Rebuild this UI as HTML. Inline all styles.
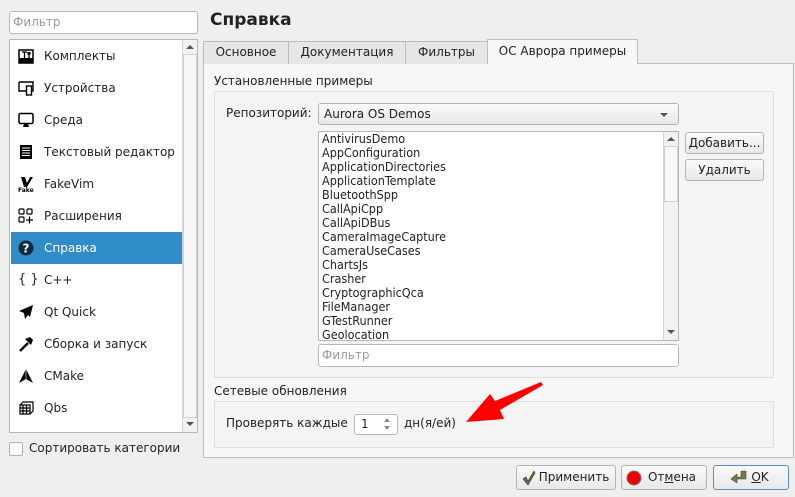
<!DOCTYPE html>
<html><head><meta charset="utf-8"><style>
*{box-sizing:border-box;margin:0;padding:0}
body{width:795px;height:497px;background:#efefef;font-family:"DejaVu Sans","Liberation Sans",sans-serif;font-size:12px;color:#222;position:relative;overflow:hidden}
.a{position:absolute}
.inp{background:#fff;border:1px solid #b8b8b8;border-radius:3px}
.ph{color:#999}
.btn{background:linear-gradient(#fafafa,#e8e8e8);border:1px solid #b4b4b4;border-radius:3px;text-align:center}
.item{position:absolute;left:1px;width:171px;height:32px;line-height:32px;padding-left:33px}
.ic{position:absolute;left:7px;top:8px;width:16px;height:16px}
.tab{position:absolute;top:41px;height:23px;border:1px solid #bdbdbd;border-bottom:none;background:#e6e6e6;line-height:21px;text-align:center;font-size:12px}
.li{font-size:12.5px;line-height:14px;font-family:"DejaVu Sans Condensed","DejaVu Sans",sans-serif}
</style></head><body>

<div class="a inp" style="left:9px;top:11px;width:189px;height:23px;line-height:21px;padding-left:3px"><span class="ph">Фильтр</span></div>

<div class="a" style="left:9px;top:39px;width:189px;height:394px;background:#fff;border:1px solid #b8b8b8">
  <div class="a" style="left:172px;top:0;width:15px;height:392px;background:#f2f2f2;border-left:1px solid #d6d6d6">
    <div class="a" style="left:3px;top:5px;border:4px solid transparent;border-bottom:4px solid #555;border-top:none"></div>
    <div class="a" style="left:0;top:14px;width:14px;height:364px;background:#f7f7f7;border:1px solid #d0d0d0"></div>
    <div class="a" style="left:3px;bottom:6px;border:4px solid transparent;border-top:4px solid #555;border-bottom:none"></div>
  </div>
  <div class="item" style="top:0">
    <svg class="ic" viewBox="0 0 16 16"><rect x="1" y="2" width="14" height="13" fill="none" stroke="#000" stroke-width="1.5"/><rect x="1" y="10" width="14" height="5" fill="#000"/><path d="M4 4h5M6.5 4v6M11 4v6M10 4v2h2V4" stroke="#000" stroke-width="1.3" fill="none"/></svg>Комплекты</div>
  <div class="item" style="top:32px">
    <svg class="ic" viewBox="0 0 16 16"><path d="M1 2h14v9h-4M8 11H1V2" fill="none" stroke="#000" stroke-width="1.4"/><rect x="8.5" y="6" width="5" height="9" fill="#fff" stroke="#000" stroke-width="1.4"/></svg>Устройства</div>
  <div class="item" style="top:64px">
    <svg class="ic" viewBox="0 0 16 16"><rect x="1" y="1.5" width="14" height="10" rx="1.5" fill="none" stroke="#000" stroke-width="1.5"/><path d="M5 15h6l-1-3H6z" fill="#000"/></svg>Среда</div>
  <div class="item" style="top:96px">
    <svg class="ic" viewBox="0 0 16 16"><rect x="2" y="1" width="12" height="14" fill="#000"/><path d="M4 4h8M4 6.5h8M4 9h8M4 11.5h8" stroke="#fff" stroke-width="1"/></svg>Текстовый редактор</div>
  <div class="item" style="top:128px">
    <svg class="ic" viewBox="0 0 16 16"><path d="M3 1h4l2 6 3-6h3L9 11H6z" fill="#000"/><text x="0" y="16" font-size="6" font-family="DejaVu Sans" font-weight="bold">Fake</text></svg>FakeVim</div>
  <div class="item" style="top:160px">
    <svg class="ic" viewBox="0 0 16 16"><rect x="1" y="1" width="5" height="5" rx="1" fill="none" stroke="#000" stroke-width="1.2"/><rect x="9" y="1" width="5" height="5" rx="1" fill="none" stroke="#000" stroke-width="1.2"/><rect x="1" y="9" width="5" height="5" rx="1" fill="none" stroke="#000" stroke-width="1.2"/><path d="M11.5 8.5v7M8 12h7" stroke="#000" stroke-width="1.3"/></svg>Расширения</div>
  <div class="item" style="top:192px;background:#308cc6;color:#fff">
    <svg class="ic" viewBox="0 0 16 16"><circle cx="8" cy="8" r="7.5" fill="#102a3d"/><text x="8" y="12.5" font-size="12" fill="#fff" text-anchor="middle" font-weight="bold" font-family="DejaVu Sans">?</text></svg>Справка</div>
  <div class="item" style="top:224px">
    <span class="a" style="left:7px;top:0;font-size:13px">{ }</span>C++</div>
  <div class="item" style="top:256px">
    <svg class="ic" viewBox="0 0 16 16"><path d="M15 1L1 7l5 2 1 6 3-4 2 2z" fill="#000"/></svg>Qt Quick</div>
  <div class="item" style="top:288px">
    <svg class="ic" viewBox="0 0 16 16"><path d="M2 15L10 7" stroke="#000" stroke-width="2.5"/><path d="M7 3l5-2 3 3-2 5z" fill="#000"/></svg>Сборка и запуск</div>
  <div class="item" style="top:320px">
    <svg class="ic" viewBox="0 0 16 16"><path d="M8 1L1 15l7-4 7 4z" fill="#000"/><path d="M8 1v10" stroke="#fff" stroke-width="0.6"/></svg>CMake</div>
  <div class="item" style="top:352px">
    <svg class="ic" viewBox="0 0 16 16"><path d="M2 5h10v9H2zM2 8h10M2 11h10M5 5v9M8.5 5v9M2 5l3-3h10v9l-3 3M15 2" fill="none" stroke="#000" stroke-width="1.2"/></svg>Qbs</div>
</div>

<div class="a" style="left:9px;top:442px;width:14px;height:14px;background:#fff;border:1px solid #b0b0b0;border-radius:2px"></div>
<div class="a" style="left:29px;top:441px">Сортировать категории</div>

<div class="a" style="left:210px;top:10px;font-size:17px;font-weight:bold">Справка</div>

<div class="a" style="left:203px;top:63px;width:591px;height:395px;background:#f7f7f7;border:1px solid #bdbdbd"></div>
<div class="tab" style="left:203px;width:86px">Основное</div>
<div class="tab" style="left:288px;width:118px">Документация</div>
<div class="tab" style="left:405px;width:83px">Фильтры</div>
<div class="tab" style="left:487px;width:151px;top:39px;height:25px;background:#f7f7f7;line-height:23px">ОС Аврора примеры</div>

<div class="a" style="left:214px;top:74px">Установленные примеры</div>
<div class="a" style="left:214px;top:91px;width:560px;height:287px;border:1px solid #dedede;border-radius:2px;background:#f4f4f4"></div>
<div class="a" style="left:226px;top:106px">Репозиторий:</div>
<div class="a btn" style="left:318px;top:103px;width:361px;height:22px;text-align:left;padding-left:5px;line-height:20px;border-radius:3px">Aurora OS Demos
  <div class="a" style="right:10px;top:9px;border:4px solid transparent;border-top:4px solid #555;border-bottom:none"></div></div>

<div class="a" style="left:318px;top:131px;width:361px;height:210px;background:#fff;border:1px solid #b8b8b8;overflow:hidden">
  <div class="a li" style="left:3px;top:0">AntivirusDemo<br>AppConfiguration<br>ApplicationDirectories<br>ApplicationTemplate<br>BluetoothSpp<br>CallApiCpp<br>CallApiDBus<br>CameraImageCapture<br>CameraUseCases<br>ChartsJs<br>Crasher<br>CryptographicQca<br>FileManager<br>GTestRunner<br>Geolocation</div>
  <div class="a" style="left:344px;top:0;width:15px;height:208px;background:#f2f2f2;border-left:1px solid #d6d6d6">
    <div class="a" style="left:3px;top:5px;border:4px solid transparent;border-bottom:4px solid #555;border-top:none"></div>
    <div class="a" style="left:0;top:14px;width:14px;height:56px;background:#f7f7f7;border:1px solid #d0d0d0"></div>
    <div class="a" style="left:3px;bottom:6px;border:4px solid transparent;border-top:4px solid #555;border-bottom:none"></div>
  </div>
</div>
<div class="a btn" style="left:685px;top:132px;width:79px;height:22px;line-height:20px">Добавить...</div>
<div class="a btn" style="left:685px;top:159px;width:79px;height:22px;line-height:20px">Удалить</div>
<div class="a inp" style="left:318px;top:344px;width:361px;height:23px;line-height:21px;padding-left:3px"><span class="ph">Фильтр</span></div>

<div class="a" style="left:214px;top:384px">Сетевые обновления</div>
<div class="a" style="left:214px;top:401px;width:560px;height:47px;border:1px solid #dedede;border-radius:2px;background:#f4f4f4"></div>
<div class="a" style="left:226px;top:416px">Проверять каждые</div>
<div class="a inp" style="left:354px;top:414px;width:44px;height:21px;line-height:19px;padding-left:6px">1
  <div class="a" style="left:29px;top:3px;border:3px solid transparent;border-bottom:4px solid #888;border-top:none"></div>
  <div class="a" style="left:29px;top:11px;border:3px solid transparent;border-top:4px solid #888;border-bottom:none"></div></div>
<div class="a" style="left:404px;top:416px">дн(я/ей)</div>

<svg class="a" style="left:0;top:0" width="795" height="497"><path d="M466 422L490 394L495 401L541 382L543 385L500 410L504 419Z" fill="#f00"/></svg>

<div class="a btn" style="left:516px;top:465px;width:100px;height:25px;line-height:23px;padding-left:16px">
  <svg class="a" style="left:5px;top:4px" width="14" height="16" viewBox="0 0 14 16"><path d="M1 9l3-2 2 4 6-10 1 2-7 12z" fill="#5c7a32" stroke="#333" stroke-width="0.6"/></svg>Применить</div>
<div class="a btn" style="left:621px;top:465px;width:86px;height:25px;line-height:23px;padding-left:16px">
  <svg class="a" style="left:4px;top:4px" width="16" height="16" viewBox="0 0 16 16"><circle cx="8" cy="8" r="7" fill="#e00" stroke="#777" stroke-width="1"/></svg>От<u>м</u>ена</div>
<div class="a btn" style="left:713px;top:465px;width:76px;height:25px;line-height:23px;padding-left:18px;border-color:#5b8ec4">
  <svg class="a" style="left:16px;top:4px" width="18" height="16" viewBox="0 0 18 16"><path d="M11 1h5v8H7v4L1 9l6-5v3h4z" fill="#6b8440" stroke="#444" stroke-width="0.6"/></svg><u>O</u>K</div>
</body></html>
